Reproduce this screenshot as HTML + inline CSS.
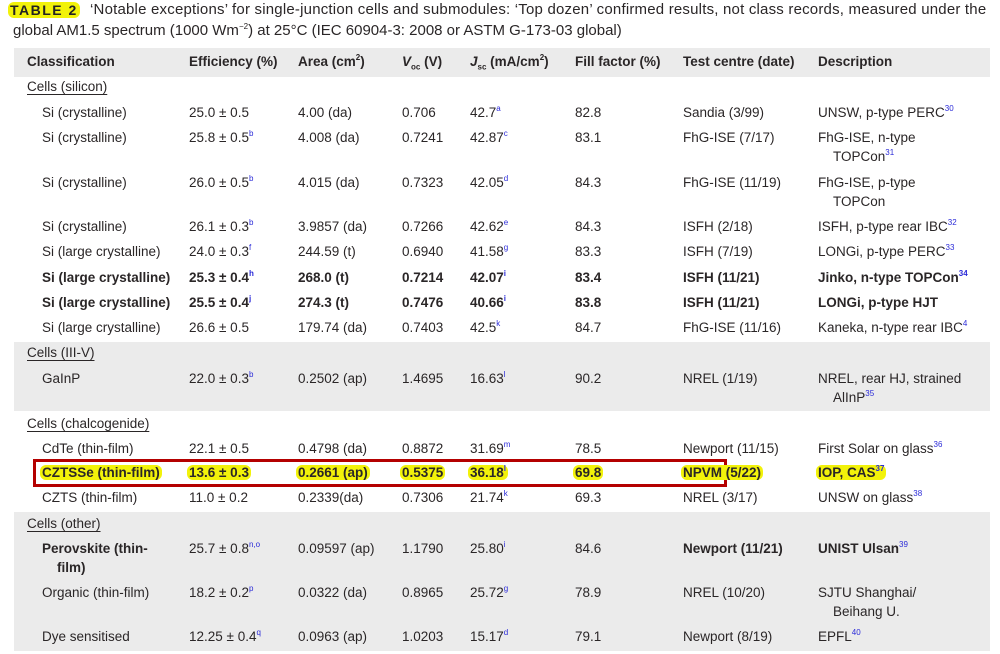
<!DOCTYPE html>
<html><head><meta charset="utf-8"><style>
body{margin:0;width:1000px;height:654px;background:#fff;position:relative;overflow:hidden;font-family:"Liberation Sans",sans-serif;color:#2a2627;font-size:13.5px}
.g{position:absolute;left:14px;width:976px;background:#ebebeb}
.t{position:absolute;white-space:nowrap;line-height:16px}
.b{font-weight:bold}
sup{color:#2b2bd8;font-size:8px;line-height:0;vertical-align:6px}
.h{background:#f2f20a;border-radius:6px;padding:0 2px;margin-left:-2px}
.u{text-decoration:underline;text-underline-offset:3px}
</style></head><body>
<div class="t" style="left:10px;top:2px;font-size:14px"><span class="b h" style="letter-spacing:1.5px;color:#222">TABLE 2</span></div>
<div class="t" style="left:90px;top:2px;font-size:15px;letter-spacing:0.2px">‘Notable exceptions’ for single-junction cells and submodules: ‘Top dozen’ confirmed results, not class records, measured under the</div>
<div class="t" style="left:13px;top:23px;font-size:15px">global AM1.5 spectrum (1000 Wm<sup style="color:#231f20">−2</sup>) at 25°C (IEC 60904-3: 2008 or ASTM G-173-03 global)</div>
<div class="g" style="top:48px;height:29px"></div>
<div class="g" style="top:342px;height:69px"></div>
<div class="g" style="top:512px;height:139px"></div>
<div style="position:absolute;left:33px;top:459px;width:688px;height:22px;border:3px solid #b40000"></div>
<div id="c"></div>
<script>
const X=[27,189,298,402,470,575,683,818];
const rows=[
[63,1,["<b>Classification</b>","<b>Efficiency (%)</b>","<b>Area (cm<sup style='color:#231f20'>2</sup>)</b>","<b><i>V</i><sub style='font-size:8px'>oc</sub> (V)</b>","<b><i>J</i><sub style='font-size:8px'>sc</sub> (mA/cm<sup style='color:#231f20'>2</sup>)</b>","<b>Fill factor (%)</b>","<b>Test centre (date)</b>","<b>Description</b>"]],
[88,0,["<span class=u>Cells (silicon)</span>"]],
[114,0,["Si (crystalline)","25.0 ± 0.5","4.00 (da)","0.706","42.7<sup>a</sup>","82.8","Sandia (3/99)","UNSW, p-type PERC<sup>30</sup>"]],
[139,0,["Si (crystalline)","25.8 ± 0.5<sup>b</sup>","4.008 (da)","0.7241","42.87<sup>c</sup>","83.1","FhG-ISE (7/17)","FhG-ISE, n-type<br>&nbsp;&nbsp;&nbsp;&nbsp;TOPCon<sup>31</sup>"]],
[184,0,["Si (crystalline)","26.0 ± 0.5<sup>b</sup>","4.015 (da)","0.7323","42.05<sup>d</sup>","84.3","FhG-ISE (11/19)","FhG-ISE, p-type<br>&nbsp;&nbsp;&nbsp;&nbsp;TOPCon"]],
[228,0,["Si (crystalline)","26.1 ± 0.3<sup>b</sup>","3.9857 (da)","0.7266","42.62<sup>e</sup>","84.3","ISFH (2/18)","ISFH, p-type rear IBC<sup>32</sup>"]],
[253,0,["Si (large crystalline)","24.0 ± 0.3<sup>f</sup>","244.59 (t)","0.6940","41.58<sup>g</sup>","83.3","ISFH (7/19)","LONGi, p-type PERC<sup>33</sup>"]],
[279,1,["Si (large crystalline)","25.3 ± 0.4<sup>h</sup>","268.0 (t)","0.7214","42.07<sup>i</sup>","83.4","ISFH (11/21)","Jinko, n-type TOPCon<sup>34</sup>"]],
[304,1,["Si (large crystalline)","25.5 ± 0.4<sup>j</sup>","274.3 (t)","0.7476","40.66<sup>i</sup>","83.8","ISFH (11/21)","LONGi, p-type HJT"]],
[329,0,["Si (large crystalline)","26.6 ± 0.5","179.74 (da)","0.7403","42.5<sup>k</sup>","84.7","FhG-ISE (11/16)","Kaneka, n-type rear IBC<sup>4</sup>"]],
[354,0,["<span class=u>Cells (III-V)</span>"]],
[380,0,["GaInP","22.0 ± 0.3<sup>b</sup>","0.2502 (ap)","1.4695","16.63<sup>l</sup>","90.2","NREL (1/19)","NREL, rear HJ, strained<br>&nbsp;&nbsp;&nbsp;&nbsp;AlInP<sup>35</sup>"]],
[425,0,["<span class=u>Cells (chalcogenide)</span>"]],
[450,0,["CdTe (thin-film)","22.1 ± 0.5","0.4798 (da)","0.8872","31.69<sup>m</sup>","78.5","Newport (11/15)","First Solar on glass<sup>36</sup>"]],
[474,2,["CZTSSe (thin-film)","13.6 ± 0.3","0.2661 (ap)","0.5375","36.18<sup>l</sup>","69.8","NPVM (5/22)","IOP, CAS<sup>37</sup>"]],
[499,0,["CZTS (thin-film)","11.0 ± 0.2","0.2339(da)","0.7306","21.74<sup>k</sup>","69.3","NREL (3/17)","UNSW on glass<sup>38</sup>"]],
[525,0,["<span class=u>Cells (other)</span>"]],
[550,0,["<b>Perovskite (thin-<br>&nbsp;&nbsp;&nbsp;&nbsp;film)</b>","25.7 ± 0.8<sup>n,o</sup>","0.09597 (ap)","1.1790","25.80<sup>i</sup>","84.6","<b>Newport (11/21)</b>","<b>UNIST Ulsan</b><sup>39</sup>"]],
[594,0,["Organic (thin-film)","18.2 ± 0.2<sup>p</sup>","0.0322 (da)","0.8965","25.72<sup>g</sup>","78.9","NREL (10/20)","SJTU Shanghai/<br>&nbsp;&nbsp;&nbsp;&nbsp;Beihang U."]],
[638,0,["Dye sensitised","12.25 ± 0.4<sup>q</sup>","0.0963 (ap)","1.0203","15.17<sup>d</sup>","79.1","Newport (8/19)","EPFL<sup>40</sup>"]]
];
let h="";
rows.forEach(([y,b,cells])=>{
 const sec=cells.length==1;
 cells.forEach((c,i)=>{
  let x=X[i]; if(i==0&&!sec&&y!=63)x=42;
  let two=c.includes("<br>");
  let lh=two?"line-height:19px;":"";
  let top=two?y-11:y-9;
  let inner=b==2?`<span class="h b">${c}</span>`:c;
  h+=`<div class="t${b==1?' b':''}" style="left:${x}px;top:${top}px;${lh}">${inner}</div>`;
 });
});
document.getElementById("c").innerHTML=h;
</script>
</body></html>
